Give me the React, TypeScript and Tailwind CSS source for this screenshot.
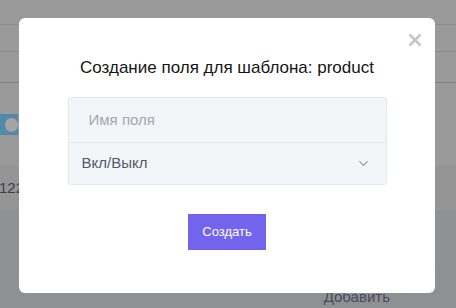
import { ChevronDown } from 'lucide-react'

export default function App() {
  return (
    <div
      className="relative w-[456px] h-[308px] overflow-hidden bg-[#9a9a9a]"
      style={{ fontFamily: '"Liberation Sans", Arial, sans-serif' }}
    >
      {/* фон страницы под оверлеем */}
      <div className="flex flex-col">
        <div className="h-[25px] border-b border-[#8a8a8a]" />
        <div className="h-[27px] border-b border-[#8a8a8a]" />
        <div className="h-[31px] border-b border-[#7f7f7f]" />
        <div className="h-[83px] flex items-center">
          <div className="w-[18px] h-[21px] bg-[#4f8aa8] flex items-center">
            <div className="w-[14px] h-[14px] rounded-full bg-[#a4a4a4] ml-[5px]" />
          </div>
        </div>
        <div className="h-[44px] bg-[#959595] flex items-center text-[15px] text-[#3b3f52]">
          <span className="-ml-[1px]">122</span>
        </div>
        <div className="h-[60px] bg-[#909192]" />
        <div className="h-[40px] bg-[#8f9091] flex justify-end pr-[66px] pt-[16px] text-[15px] text-[#474c60]">
          Добавить
        </div>
      </div>

      {/* модальное окно */}
      <div className="absolute left-[19px] top-[18px] w-[416px] h-[275px] bg-white rounded-md flex flex-col items-center pt-[37px]">
        <svg
          className="absolute right-[13px] top-[15px]"
          width="14"
          height="14"
          viewBox="0 0 14 14"
        >
          <path d="M1.5 1.5 L12.5 12.5 M12.5 1.5 L1.5 12.5" stroke="#c6c6c6" strokeWidth="2.6" />
        </svg>

        <h3 className="text-[17px] leading-[26px] text-[#151515]">
          Создание поля для шаблона: product
        </h3>

        <div className="mt-[16px] w-[319px] rounded-[3px] border border-[#e4e8ee] bg-[#f3f6f9]">
          <div className="h-[45px] flex items-center text-[15px] text-[#a2a6b5] border-b border-[#e4e8ee]">
            <span className="ml-[20px]">Имя поля</span>
          </div>
          <div className="h-[41px] flex items-center text-[15px] text-[#555a6b]">
            <span className="ml-[13px] flex-1">Вкл/Выкл</span>
            <ChevronDown size={15} strokeWidth={1.8} className="text-[#8e92a0] mr-[15px]" />
          </div>
        </div>

        <button className="mt-[29px] w-[78px] h-[36px] bg-[#7364ee] text-white text-[13px] font-medium">
          Создать
        </button>
      </div>
    </div>
  )
}
